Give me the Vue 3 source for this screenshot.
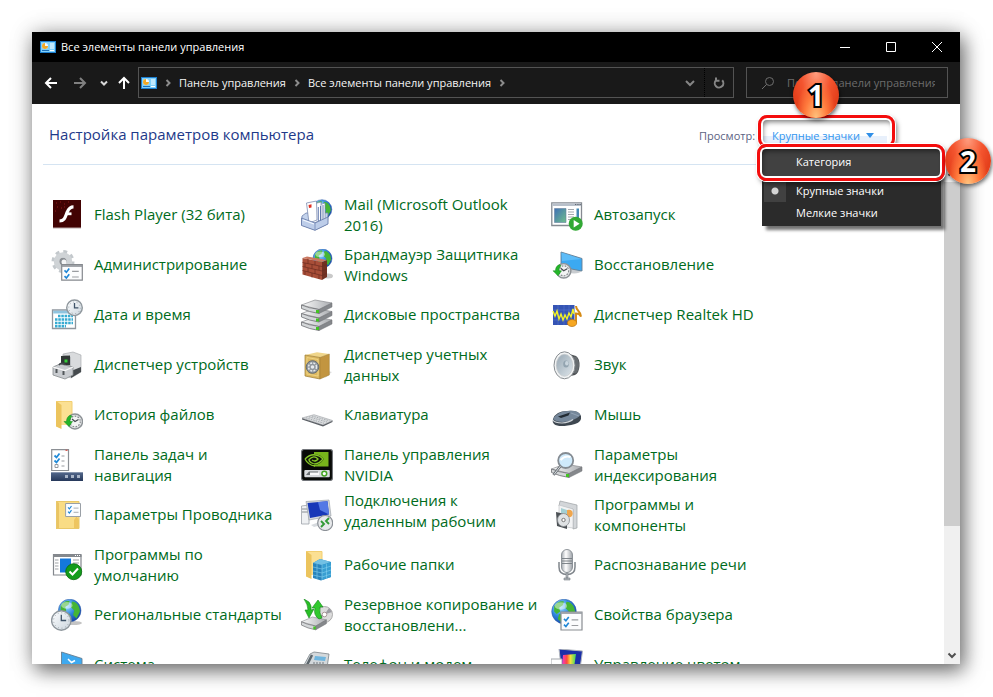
<script setup>
import { ref } from 'vue'

const search = ref('')
const view = ref('Крупные значки')
const menuOpen = ref(true)

const globe = (x, y, r) => `
  <circle cx="${x}" cy="${y}" r="${r}" fill="url(#g-globe)" stroke="#2b57a5" stroke-width=".5"/>
  <path transform="translate(${x} ${y}) scale(${r / 10})" fill="#45b535" d="M-8-4C-6-8-2-9 0-8L-1-5-4-3-3 0-6 2-8 0ZM2-8C6-8 9-4 9 1L6 7 3 4 4 0 1-3ZM-4 2L0 3 1 6-2 9-5 6Z"/>
  <ellipse cx="${x - r * 0.25}" cy="${y - r * 0.45}" rx="${r * 0.5}" ry="${r * 0.3}" fill="#fff" opacity=".45"/>`

const clock = (x, y, r) => `
  <circle cx="${x}" cy="${y}" r="${r}" fill="url(#g-clock)" stroke="#8f979d" stroke-width="1.4"/>
  <circle cx="${x}" cy="${y}" r="${r - 2}" fill="none" stroke="#8f979d" stroke-width=".8" stroke-dasharray="1 2.6"/>
  <path d="M${x} ${y - r * 0.6}V${y}H${x + r * 0.5}" fill="none" stroke="#3f5368" stroke-width="1.3"/>`

const historyClock = (x, y, r) => `
  <circle cx="${x}" cy="${y}" r="${r}" fill="#e4e6e7" stroke="#8d9296" stroke-width="1.4"/>
  <circle cx="${x}" cy="${y}" r="${r - 2.2}" fill="#f3f4f4" stroke="#84898d" stroke-width="1.2" stroke-dasharray="1.600 1.400"/>
  <path d="M${x - 3} ${y - 2.5}L${x} ${y} ${x + 3.5} ${y - 2}" fill="none" stroke="#454b50" stroke-width="1.3"/>
  <path d="M${x - r + 3} ${y - r + 1}C${x - r} ${y - 5} ${x - r - 1} ${y - 3} ${x - r - 1} ${y}h-2.5l5 5 3.5-5h-2.500c0-3 1-4 2-5z" fill="#25b52a" stroke="#128a1a" stroke-width=".5"/>`

const drive = (y) => `
  <path d="M.5 ${y + 5}L14 ${y} 31 ${y + 3} 18 ${y + 9.5}Z" fill="url(#g-silver)" stroke="#8b8d90" stroke-width=".7"/>
  <path d="M.5 ${y + 5}V${y + 8.5}Q8 ${y + 12} 18 ${y + 13.500}V${y + 9.5}Q7 ${y + 8} .5 ${y + 5}Z" fill="#d4d7d9" stroke="#6d6f72" stroke-width=".8"/>
  <path d="M18 ${y + 9.5}L31 ${y + 3}V${y + 7}L18 ${y + 13.5}Z" fill="#85888c" stroke="#6d6f72" stroke-width=".5"/>
  <path d="M15 ${y + 10}h3v3h-3z" fill="#42c422"/>`

const folder = `
  <path d="M5 2H21V26H9V29L5 27Z" fill="#fbe093"/>
  <path d="M5 2L10.500 6V30L5 27.500Z" fill="#ecc45d"/>
  <path d="M5.500 2.500H21V25" fill="none" stroke="#f2cf70"/>`

const checks = (x, y, s) => `
  <path transform="translate(${x} ${y}) scale(${s})" d="M0 2L2 4 5 0M0 8L2 10 5 6" fill="none" stroke="#2087d6" stroke-width="1.7"/>
  <path transform="translate(${x} ${y}) scale(${s})" d="M8 3H15M8 9H15" stroke="#9a9da1" stroke-width="1.2"/>`

const icons = {
  flash: `<path d="M2 1H30V29.500H2Z" fill="#b9a8a8"/><path d="M2 1H30V28.500H2Z" fill="#420303"/>
    <path d="M5 4h1M9 3h1M13 5h1M6 8h1M10 9h1M4 12h1M17 3h1M13 8h1" stroke="#8d1b1b"/>
    <path d="M8.500 22C14.500 22 14.500 16.500 16.500 12.500 18 9 19.500 7.800 22.500 7.800" fill="none" stroke="#fff" stroke-width="3.200"/><path d="M15.500 14.800H20.500" stroke="#fff" stroke-width="2.800"/>`,
  admin: `<circle cx="12" cy="12.500" r="9.500" fill="none" stroke="#c3c8cc" stroke-width="4" stroke-dasharray="3.700 3.760"/>
    <circle cx="12" cy="12.500" r="6.500" fill="none" stroke="#cfd3d6" stroke-width="5.500"/><circle cx="12" cy="12.500" r="3.700" fill="#8a8f94"/><circle cx="13" cy="13" r="2.500" fill="#f4f5f6"/>
    <path d="M10.700 15.700H31.300V31.200H10.700Z" fill="#fcfdfe" stroke="#85898e" stroke-width="1.200"/><path d="M11 17H31" stroke="#8d9197" stroke-width="1.600"/>
    ${checks(13.5, 19.5, 0.95)}`,
  date: `<path d="M1.500 11H24.500V29.500H1.500Z" fill="#fff" stroke="#90979e" stroke-width="1.300"/><path d="M2.200 11.700H23.800V14.500H2.200Z" fill="#8fc4df"/>
    <g stroke="#37abd2" stroke-width="2.400" stroke-dasharray="2.500 .800"><path d="M7 17H22"/><path d="M4 20.500H22"/><path d="M4 24H22"/><path d="M4 27.300H15"/></g>${clock(23.5, 8.8, 7.8)}`,
  mail: `${globe(21, 10.5, 9.8)}<path d="M1 17L5 14H27L26.500 25 14 31 .5 26Z" fill="#c4d3ec" stroke="#6f83ae" stroke-width=".8"/>
    <path d="M15 7L24 4V21L15 25Z" fill="#fff" stroke="#7486ac" stroke-width=".7"/><path d="M10.500 5.500L20 3V21L11 25Z" fill="#fff" stroke="#7486ac" stroke-width=".7"/><path d="M5.500 4L15.500 2 16 21 8 24Z" fill="#fff" stroke="#6a7ca6" stroke-width=".7"/>
    <path d="M17.300 8V22M19.500 7V22M22 6V22" stroke="#536da6" stroke-width=".9"/><path d="M7.500 6L10.500 5.300V8.500L8 9Z" fill="#df3023"/>
    <path d="M.5 19L14 24 27 18V25L14 31.300 .5 26.500Z" fill="#bdcde9" stroke="#6377a6" stroke-width=".8"/><path d="M14 24V31" stroke="#7e92bd"/><path d="M2 21L13 25" stroke="#f4f8ff" stroke-width="1.200"/>`,
  firewall: `${globe(21.5, 9.5, 9.5)}<ellipse cx="27" cy="27" rx="5" ry="2.500" fill="#c9c9c9"/>
    <path d="M1.500 9L21 13V31L1.500 25.500Z" fill="#a84e38"/><path d="M21 13L26 11V28L21 31Z" fill="#713122"/><path d="M1.500 9L6 7.500 26 11 21 13Z" fill="#ca7861"/>
    <path d="M1.500 13.500L21 17.500M1.500 17.500L21 22M1.500 21.500L21 26.500M7 10V14.500M14 12V16M4 14V18M11 15.500V19.500M18 17V21M7 19V23M14 20.500V25M4 22.500V26M11 24V28.500M18 26V30M21 17.500L26 15.500M21 22L26 20M21 26.500L26 24" stroke="#6a2b20" stroke-width=".7"/>`,
  disks: `${drive(18)}${drive(9.5)}${drive(1)}`,
  autoplay: `<path d="M.8 3.800H30.500V26.500H.8Z" fill="#fff" stroke="#858a91" stroke-width="1.300"/><path d="M1.400 4.400H30V7H1.400Z" fill="#b8c0ca"/><path d="M24 5.500h1.300M26.300 5.500h1.300M28.500 5.500h1.300" stroke="#606873"/>
    <path d="M3.500 9.500H15V23.500H3.500Z" fill="url(#g-pic)" stroke="#6580a0" stroke-width=".6"/><path d="M17 10.500h6M17 13h6M17 15.500h6M17 18h6M17 20.500h3" stroke="#a2a7ad" stroke-width="1.200"/><path d="M25.500 9.500H28V20H25.500Z" fill="#4489b4"/>
    <circle cx="24.700" cy="24.700" r="7" fill="#32a934"/><path d="M22.700 21L28.600 24.700 22.700 28.400Z" fill="#fff"/>`,
  recovery: `<ellipse cx="23" cy="22" rx="7" ry="2.500" fill="#c8ccd0"/><path d="M10 3L31 9.500V22L10 18Z" fill="#3ba9f2" stroke="#667e91" stroke-width=".9"/><path d="M10.500 3.500L30.500 10 11 12Z" fill="#6cc5fb" opacity=".7"/>${historyClock(12.7, 21.8, 7.2)}`,
  realtek: `<path d="M2 6H23.500V26H2Z" fill="#3554b4"/><path d="M2 11H23M2 16H23M2 21H23M7 6V26M13 6V26M18 6V26" stroke="#5574cd" stroke-width=".6"/>
    <path d="M2 12L4 17 6 12 8 20 10 15 12 21 14 16 16 20 18 14 20 18 22 10 23 15" fill="none" stroke="#f2f224" stroke-width="1.400"/>
    <path d="M25 7C25 12 30 12 30 17.500 29 15.500 27 14.500 25 14.500V23.500" fill="none" stroke="#d58a15" stroke-width="2"/><ellipse cx="21" cy="24" rx="4.700" ry="3.500" fill="#f6a722" stroke="#b66f0c" stroke-width=".7"/>`,
  device: `<path d="M12 5L22 3 30 6V23L20 29 12 25Z" fill="#d9dbdd" stroke="#9fa3a6" stroke-width=".6"/><path d="M12 5L20 8V28L12 25Z" fill="#bcbfc2"/><path d="M20 22L30 18V23L20 29Z" fill="#454a4d"/>
    <path d="M10 7L19 6.500V16L10 17Z" fill="#303735"/><path d="M13.500 10.500h3v3h-3z" fill="#33cf39"/>
    <path d="M2 18L9 15 22 18V26L14 30 2 26Z" fill="#c9ccd0" stroke="#858a8d" stroke-width=".8"/><path d="M2 18L14 21.500 22 18" fill="none" stroke="#f8f8f8" stroke-width="1.200"/><path d="M5.500 20v4M12.500 22v4" stroke="#52575a" stroke-width="2"/><path d="M8 16Q10 13 14 15.500" stroke="#43494d" stroke-width="1.500" fill="none"/>`,
  credentials: `<path d="M24 29L31 23 27 22Z" fill="#ddd"/><path d="M4 6L16 3.300 28.300 5 19 8.500Z" fill="#efd58a"/><path d="M4 6L19 8.500V30L4 27Z" fill="#dcb860" stroke="#9c7b30" stroke-width=".7"/><path d="M19 8.500L28.300 5V26L19 30Z" fill="#c29540" stroke="#9c7b30" stroke-width=".5"/><path d="M6 8.500L17 10.500V27L6 25Z" fill="none" stroke="#f2d98b" stroke-width=".8"/>
    <circle cx="11.500" cy="18" r="6.300" fill="#90979c" stroke="#666d72"/><circle cx="11.500" cy="18" r="4" fill="none" stroke="#e6eaec" stroke-width="1.500" stroke-dasharray="2 1.200"/><circle cx="11.500" cy="18" r="1.800" fill="#e7ebed"/>`,
  sound: `<path d="M15 4L25 7Q29 10 28.500 17 28 24 24 26L15 28Z" fill="#4d5154"/><ellipse cx="24" cy="16" rx="4" ry="8.500" fill="#676c70"/><ellipse cx="13.500" cy="16.300" rx="10.500" ry="13.500" fill="#f1f3f4" stroke="#888d91"/>
    <ellipse cx="13.500" cy="16.300" rx="8.200" ry="11" fill="url(#g-cone)" stroke="#c1c5c8" stroke-width=".7"/><ellipse cx="15" cy="15" rx="2.800" ry="3.600" fill="#93a4b0"/><ellipse cx="15.800" cy="14.300" rx="1.700" ry="2.200" fill="#c9d5dd"/>`,
  history: `${folder}${historyClock(24, 22.5, 7.5)}`,
  keyboard: `<path d="M1 19L13 15.700 31.500 21.500 22 26Z" fill="#dadcde" stroke="#9b9ea2" stroke-width=".6"/><path d="M1 19.300L22 26 31.500 21.800V23L22 27.500 1 20.500Z" fill="#5c6066"/><path d="M5 18.800L23 24.300M8 17.800L26 23M11 17L28.500 21.800" stroke="#a3a8ad" stroke-width=".9" stroke-dasharray="1.500 1"/>`,
  mouse: `<path d="M2 20Q5 12 16 12 28 11 30 17 31 23 24 25 8 29 3 25 1 23 2 20Z" fill="#3e4750"/><path d="M2 20Q7 12 17 12 27 11 29.500 16 24 22 12 23 5 23 2 20Z" fill="#75879a"/><path d="M1.800 21Q4 24 11 24 18 23.500 22 20.500" fill="none" stroke="#d0d5da" stroke-width="1.100"/><path d="M7 17.500L19 13.500 17.500 16.500 10 19Z" fill="#222b33"/><path d="M20 14L28 17" stroke="#92a3b5"/>`,
  taskbar: `<path d="M.7.700H17.500V21.500H.7Z" fill="#fff" stroke="#8b8f94" stroke-width="1.200"/><path d="M14.500 1.300h2" stroke="#db5449" stroke-width="1.200"/>
    <path d="M3.500 6.500L5.500 8.500 8.500 4.500M3.500 11.500L5.500 13.500 8.500 9.500" fill="none" stroke="#218bd8" stroke-width="1.800"/><path d="M10.500 7h3M10.500 12h3M10.500 17h3" stroke="#979b9f"/><path d="M4 15.500h3v3H4z" fill="none" stroke="#95999e"/>
    <path d="M0 23.300H32V32H0Z" fill="url(#g-bar)"/><path d="M14 26h3v3h-3zM20 26h3v3h-3zM26 26h3v3h-3z" fill="#a8b4c7"/>`,
  nvidia: `<rect x=".5" y=".5" width="31" height="31" rx="2.500" fill="#080a07" stroke="#72757a" stroke-width="1.200"/><path d="M13 3H27.500V17.500H13Z" fill="#78b51b"/>
    <path d="M4 10Q10 2 19 6.500L23 10Q18 17 12 15.500 7 14.500 4 10Z" fill="#10160b"/><path d="M4 10Q11 3 19 7.500L22 10Q17 16 12 14.500 8 13 8 10.500 13 5.500 17 10 14.500 13.500 11 11M4 10Q7 16 14 17" fill="none" stroke="#86c926" stroke-width="1.300"/>
    <rect x="3.300" y="21" width="25.500" height="7.200" rx="1" fill="#d8dbdd"/><path d="M5 26L8 22.500H17V26Z" fill="#6b7073"/><rect x="9" y="23.500" width="9" height="2.500" fill="#f9f9f9"/><circle cx="23.300" cy="24.600" r="2.400" fill="#fff" stroke="#46a524" stroke-width="1.500"/>`,
  indexing: `${drive(15)}<circle cx="14.700" cy="11.500" r="7.500" fill="#cfeafb" stroke="#858c93" stroke-width="1.800"/><path d="M9.500 11Q14 6 19.500 8" fill="none" stroke="#fff" stroke-width="2"/><path d="M9.500 17L2.500 26" stroke="#6c7278" stroke-width="2.600"/><path d="M9.500 17L3 25.500" stroke="#dadee1"/>`,
  explorer: `<path d="M5 2H28V29.500H5Z" fill="#f9dc85"/><path d="M5 2L8 4V30H5Z" fill="#eac463"/><path d="M23 29.500V21L25.500 17.500 28 21V29.500Z" fill="#eec560"/><path d="M5.500 2.500H28V29.500H5.500Z" fill="none" stroke="#e9c869"/>
    <path d="M14.600 4.500H29.500V17.500H14.600Z" fill="#fbfdff" stroke="#9aa0a6"/>${checks(17, 7, 0.7)}`,
  remote: `<path d="M.5 7L8 6V25H.5Z" fill="#eff1f3" stroke="#9da2a8" stroke-width=".8"/><path d="M1 10h6M1 13h6" stroke="#888e94"/><path d="M5 2.500L28 1 30 17 8 21Z" fill="#d6dade" stroke="#9298a0" stroke-width=".6"/><path d="M6.500 4L26.500 2.300 28 15.500 9 19Z" fill="#1838b8"/><path d="M17 3L26.500 2.300 28 15.500 19 11Z" fill="#5378e5"/><path d="M10 26L21 22 24 25 13 28Z" fill="#d6dade"/>
    <circle cx="24.200" cy="24" r="7.500" fill="#e7e9eb" stroke="#8b9096" stroke-width="1.200"/><path d="M20 22L23 25 20 28M28 19L25 22 28 25" fill="none" stroke="#329a36" stroke-width="1.900"/>`,
  programs: `<path d="M9 2L26 6V29L22 30V10L8 7Z" fill="#d3d6d9" stroke="#9ca0a4" stroke-width=".7"/><path d="M8 6L22 10V29L8 27Z" fill="#f2f3f4" stroke="#bcc0c3" stroke-width=".6"/><circle cx="18" cy="14.500" r="3.700" fill="#f0a64d"/><path d="M10 9l6 2v4l-6-1z" fill="#a3cfd3"/>
    <path d="M5 13L16 15.500V30L6 27Z" fill="#4c5155"/><ellipse cx="12.500" cy="21" rx="6" ry="6.500" fill="#dfe2e4" stroke="#888c90" stroke-width=".8"/><circle cx="12.500" cy="21" r="1.700" fill="#fff" stroke="#777"/>`,
  defaults: `<path d="M2.500 5.500H30V26H2.500Z" fill="#fff" stroke="#83878d" stroke-width="1.200"/><path d="M2 7H30.500" stroke="#85898e" stroke-width="2"/><path d="M24 6.500h1M26 6.500h1M28 6.500h1" stroke="#fff"/><path d="M4 11h3.500M4 14h3.500M4 17h3.500M4 20h3.500M22 11h6M22 14h6" stroke="#9da1a5"/><path d="M9 9.500H20V23.500H9Z" fill="#1478dc"/>
    <circle cx="22.700" cy="22.700" r="8" fill="#139c1c" stroke="#076b0e" stroke-width=".8"/><path d="M18.500 22.500L21.500 25.500 27 19.500" fill="none" stroke="#fff" stroke-width="2"/>`,
  folders: `${folder}<path d="M12 14L19 10 30 13V28L20 31.500 12 29Z" fill="#2984bd"/><path d="M12 14L19 10 30 13 21 16Z" fill="#72c0e4"/><path d="M21 16L30 13V28L21 31Z" fill="#389ed2"/><path d="M12 18L21 20 30 17M12 22L21 24 30 21M12 26L21 28 30 25M16 15V30M21 16V31M25.500 14.500V30" fill="none" stroke="#83d0ef" stroke-width=".6"/>`,
  speech: `<rect x="10.500" y=".5" width="11" height="23" rx="5.500" fill="url(#g-mic)" stroke="#858b91" stroke-width=".9"/><path d="M11 9.500H21M11 12H21M11 14.500H21" stroke="#747a80" stroke-width=".9"/><path d="M8 13V18Q8 25.500 16 25.500 24 25.500 24 18V13" fill="none" stroke="#80868c" stroke-width="1.500"/><path d="M15 24h2v5h-2zM13 29H19V31H13Z" fill="#afb4b8" stroke="#7a8086" stroke-width=".6"/>`,
  region: `<ellipse cx="22" cy="24" rx="9" ry="2" fill="#c4c4c4"/>${globe(18.7, 11.5, 11.3)}${clock(10.3, 21.5, 9.7)}`,
  backup: `<circle cx="23.500" cy="15.500" r="8" fill="#dcdcdc" stroke="#999" stroke-width=".8"/><path d="M23.500 15.500L28 9 31 13ZM23.500 15.500L18 21 16 17Z" fill="#9c9ca3"/><circle cx="23.500" cy="15.500" r="2.300" fill="#fff" stroke="#a99"/>
    <g transform="translate(0 18) scale(.82 .95)">${drive(0)}</g><path d="M3 0L8 3Q11 7 10 11L13 10 8 19 4 11 7 11Q7 6 3 0Z" fill="#28bf26" stroke="#138419" stroke-width=".6"/><path d="M18 20Q12 16 14 9L11 9 17 1 22 8H19Q18 14 21 19Z" fill="#30c92d" stroke="#138419" stroke-width=".6"/>`,
  browser: `${globe(13, 12.5, 12.3)}<path d="M10 13H31V31H10Z" fill="#fbfcfd" stroke="#898d92" stroke-width="1.200"/><path d="M10 14H31" stroke="#9ba0a6" stroke-width="1.800"/>${checks(13, 18, 0.95)}`,
  system: `<path d="M10.500 3L31 9.500V24L10.500 20Z" fill="#3ea9ef" stroke="#667e91" stroke-width=".9"/><path d="M17 10L20.500 13.500 24 11.500" fill="none" stroke="#fff" stroke-width="1.500"/>`,
  phone: `<path d="M3 16L9 5 13 3 28 5 26 19 2 20Z" fill="#d3d8db" stroke="#7b8388" stroke-width=".8"/><path d="M5 18L11 6" stroke="#5d666c" stroke-width="2.500"/><path d="M14 7L25 8 24 12 13 11Z" fill="#6fb5de"/><path d="M12 14H23M11 16H22" stroke="#727a80" stroke-dasharray="2 1"/>`,
  color: `<path d="M8 0L31.500 2 29 20 10 17Z" fill="#1b2fa8" stroke="#b2b7bd"/><path d="M0 10H11V24H0Z" fill="#fff" stroke="#a3a7ac"/><path d="M12 6L25 5 23 19 11 18Z" fill="url(#g-rainbow)"/>`,
}

const items = [
  ['flash', 'Flash Player (32 бита)'],
  ['mail', 'Mail (Microsoft Outlook\n2016)'],
  ['autoplay', 'Автозапуск'],
  ['admin', 'Администрирование'],
  ['firewall', 'Брандмауэр Защитника\nWindows'],
  ['recovery', 'Восстановление'],
  ['date', 'Дата и время'],
  ['disks', 'Дисковые пространства'],
  ['realtek', 'Диспетчер Realtek HD'],
  ['device', 'Диспетчер устройств'],
  ['credentials', 'Диспетчер учетных\nданных'],
  ['sound', 'Звук'],
  ['history', 'История файлов'],
  ['keyboard', 'Клавиатура'],
  ['mouse', 'Мышь'],
  ['taskbar', 'Панель задач и\nнавигация'],
  ['nvidia', 'Панель управления\nNVIDIA'],
  ['indexing', 'Параметры\nиндексирования'],
  ['explorer', 'Параметры Проводника'],
  ['remote', 'Подключения к\nудаленным рабочим', true],
  ['programs', 'Программы и\nкомпоненты'],
  ['defaults', 'Программы по\nумолчанию'],
  ['folders', 'Рабочие папки'],
  ['speech', 'Распознавание речи'],
  ['region', 'Региональные стандарты'],
  ['backup', 'Резервное копирование и\nвосстановлени...'],
  ['browser', 'Свойства браузера'],
  ['system', 'Система'],
  ['phone', 'Телефон и модем'],
  ['color', 'Управление цветом'],
].map(([icon, label, raised]) => ({ icon, label, raised }))

const panelIcon = `<path d="M0 0H16V12H0Z" fill="#1d7fd0"/><path d="M1 1H15V11H1Z" fill="#7fd0fa"/><circle cx="5" cy="5" r="3" fill="#f5f8fa"/><path d="M5 5V2A3 3 0 1 0 8 5Z" fill="#f0a927"/><path d="M10 3h4M10 5h4M10 7h4" stroke="#fff"/><path d="M2 9.500h7" stroke="#1d6fb8"/><path d="M10 9.500h4" stroke="#fff"/>`

function pick(name) {
  view.value = name
  menuOpen.value = false
}
</script>

<template>
  <div class="desktop">
    <svg class="defs" width="0" height="0" aria-hidden="true">
      <defs>
        <radialGradient id="g-globe" cx=".35" cy=".3" r=".8"><stop offset="0" stop-color="#9fe0ff" /><stop offset=".5" stop-color="#2f86dd" /><stop offset="1" stop-color="#123a9c" /></radialGradient>
        <linearGradient id="g-clock" x1="0" y1="0" x2="1" y2="1"><stop offset="0" stop-color="#fdfeff" /><stop offset="1" stop-color="#cbd5dd" /></linearGradient>
        <linearGradient id="g-silver"><stop offset="0" stop-color="#fafafa" /><stop offset="1" stop-color="#a9acb0" /></linearGradient>
        <linearGradient id="g-pic" x1="0" y1="0" x2="1" y2="1"><stop offset="0" stop-color="#3f6fb5" /><stop offset="1" stop-color="#6fc08c" /></linearGradient>
        <linearGradient id="g-cone" x1="0" y1="0" x2="1" y2="1"><stop offset="0" stop-color="#97a7b3" /><stop offset="1" stop-color="#dde5ea" /></linearGradient>
        <linearGradient id="g-bar" x1="0" y1="0" x2="0" y2="1"><stop offset="0" stop-color="#54698c" /><stop offset="1" stop-color="#26385a" /></linearGradient>
        <linearGradient id="g-mic"><stop offset="0" stop-color="#a6abb1" /><stop offset=".4" stop-color="#fff" /><stop offset="1" stop-color="#9da2a8" /></linearGradient>
        <linearGradient id="g-rainbow"><stop offset="0" stop-color="#f03ad0" /><stop offset=".35" stop-color="#ff4b3a" /><stop offset=".6" stop-color="#f7e13a" /><stop offset="1" stop-color="#36d668" /></linearGradient>
      </defs>
    </svg>

    <main class="window">
      <header class="titlebar">
        <svg class="app-icon" viewBox="0 0 16 12" aria-hidden="true" v-html="panelIcon"></svg>
        <span class="title">Все элементы панели управления</span>
        <button class="caption" aria-label="Свернуть"><svg viewBox="0 0 12 12"><path d="M1 6.500H11" /></svg></button>
        <button class="caption" aria-label="Развернуть"><svg viewBox="0 0 12 12"><path d="M1.500 1.500H10.500V10.500H1.500Z" /></svg></button>
        <button class="caption" aria-label="Закрыть"><svg viewBox="0 0 12 12"><path d="M1 1L11 11M11 1L1 11" /></svg></button>
      </header>

      <nav class="toolbar">
        <div class="history">
          <button aria-label="Назад"><svg class="arrow" viewBox="0 0 14 14"><path d="M13 7H2M7 2L2 7 7 12" /></svg></button>
          <button class="dim" aria-label="Вперед"><svg class="arrow" viewBox="0 0 14 14"><path d="M1 7H12M7 2L12 7 7 12" /></svg></button>
          <button class="small" aria-label="Последние"><svg class="tiny" viewBox="0 0 8 8"><path d="M1 2.500L4 5.500 7 2.500" /></svg></button>
          <button class="small" aria-label="Вверх"><svg class="arrow" viewBox="0 0 14 14"><path d="M7 13V2M2 7L7 2 12 7" /></svg></button>
        </div>
        <div class="address">
          <svg class="app-icon" viewBox="0 0 16 12" aria-hidden="true" v-html="panelIcon"></svg>
          <svg class="crumb-sep" viewBox="0 0 8 8"><path d="M2.500 1L5.500 4 2.500 7" /></svg>
          <a href="#">Панель управления</a>
          <svg class="crumb-sep" viewBox="0 0 8 8"><path d="M2.500 1L5.500 4 2.500 7" /></svg>
          <a href="#">Все элементы панели управления</a>
          <svg class="crumb-sep" viewBox="0 0 8 8"><path d="M2.500 1L5.500 4 2.500 7" /></svg>
          <button class="drop" aria-label="Предыдущие расположения"><svg viewBox="0 0 10 10"><path d="M1 3L5 7 9 3" /></svg></button>
          <button class="refresh" aria-label="Обновить"><svg viewBox="0 0 12 12"><path d="M3 3.200A4.300 4.300 0 1 0 9.200 3.300M3 .500V3.800H6.500" /></svg></button>
        </div>
        <label class="search">
          <svg viewBox="0 0 14 14"><circle cx="8.500" cy="5.500" r="4" /><path d="M5.500 8.500L1 13" /></svg>
          <input v-model="search" type="search" placeholder="Поиск в панели управления" aria-label="Поиск в панели управления" />
        </label>
        <span class="badge badge-one">1</span>
      </nav>

      <section class="heading">
        <h1>Настройка параметров компьютера</h1>
        <span class="view-label">Просмотр:</span>
        <div class="view">
          <button class="view-button" aria-haspopup="menu" :aria-expanded="menuOpen" @click="menuOpen = !menuOpen">
            {{ view }}
            <svg viewBox="0 0 8 5"><path d="M0 0H8L4 5Z" /></svg>
          </button>
          <span class="ring ring-view"></span>
          <div v-if="menuOpen" class="menu" role="menu">
            <button class="hot" role="menuitemradio" @click="pick('Категория')">Категория</button>
            <button :class="{ checked: view === 'Крупные значки' }" role="menuitemradio" @click="pick('Крупные значки')">Крупные значки</button>
            <button role="menuitemradio" @click="pick('Мелкие значки')">Мелкие значки</button>
            <span class="ring ring-item"></span>
            <span class="badge badge-two">2</span>
          </div>
        </div>
      </section>

      <section class="content">
        <div class="items">
          <a v-for="item in items" :key="item.icon" class="item" href="#">
            <svg viewBox="0 0 32 32" aria-hidden="true" v-html="icons[item.icon]"></svg>
            <span :class="{ raised: item.raised }">{{ item.label }}</span>
          </a>
        </div>
        <div class="scrollbar" aria-hidden="true">
          <svg viewBox="0 0 16 17"><path d="M4.500 10.500L8 7 11.500 10.500" /></svg>
          <div class="thumb"></div>
          <div class="track"></div>
          <svg viewBox="0 0 16 17"><path d="M4.500 6.500L8 10 11.500 6.500" /></svg>
        </div>
      </section>
    </main>
  </div>
</template>

<style>
body {
  margin: 0;
  background: #fff;
}
</style>

<style scoped>
.desktop {
  box-sizing: border-box;
  height: 100vh;
  padding: 32px 33px 33px 32px;
  overflow: hidden;
  font: 11px/16px "Open Sans", "Noto Sans", sans-serif;
}
.defs {
  position: absolute;
}
.window {
  box-sizing: border-box;
  display: flex;
  flex-direction: column;
  height: 100%;
  background: #fff;
  box-shadow: 0 0 22px rgba(0, 0, 0, 0.22), 4px 7px 18px rgba(0, 0, 0, 0.5);
}
button {
  padding: 0;
  border: 0;
  background: none;
  color: inherit;
  font: inherit;
}
a {
  color: inherit;
  text-decoration: none;
}
.titlebar {
  display: flex;
  align-items: center;
  height: 30px;
  padding-left: 8px;
  background: #000;
  color: #fff;
}
.app-icon {
  width: 16px;
  height: 12px;
  flex: none;
}
.title {
  flex: 1;
  padding-left: 5px;
}
.caption {
  display: grid;
  place-items: center;
  width: 46px;
  height: 30px;
}
.caption svg {
  width: 12px;
  height: 12px;
  fill: none;
  stroke: #fff;
}
.toolbar {
  position: relative;
  box-sizing: border-box;
  display: flex;
  align-items: center;
  height: 42px;
  padding: 0 12px 1px 0;
  background: #191919;
  color: #f4f4f4;
}
.history {
  display: flex;
  align-items: center;
  width: 102px;
  padding-left: 4px;
}
.history button {
  display: grid;
  place-items: center;
  width: 30px;
  height: 31px;
}
.history .dim {
  width: 28px;
}
.history .small {
  width: 20px;
}
.arrow {
  width: 14px;
  height: 14px;
  fill: none;
  stroke: #fff;
  stroke-width: 2;
}
.dim .arrow {
  stroke: #808080;
}
.tiny {
  width: 8px;
  height: 8px;
  fill: none;
  stroke: #d8d8d8;
  stroke-width: 2;
}
.address {
  box-sizing: border-box;
  display: flex;
  align-items: center;
  flex: 1;
  height: 31px;
  padding-left: 2px;
  border: 1px solid #535353;
  white-space: nowrap;
}
.crumb-sep {
  width: 8px;
  height: 8px;
  padding: 0 7px;
  fill: none;
  stroke: #8c8c8c;
  stroke-width: 2;
}
.drop {
  display: grid;
  place-items: center;
  width: 30px;
  height: 29px;
  margin-left: auto;
  border-right: 1px dotted #000;
}
.refresh {
  display: grid;
  place-items: center;
  width: 28px;
  height: 29px;
}
.drop svg {
  width: 10px;
  height: 10px;
  fill: none;
  stroke: #858585;
  stroke-width: 2;
}
.refresh svg {
  width: 12px;
  height: 12px;
  fill: none;
  stroke: #858585;
  stroke-width: 2;
}
.search {
  box-sizing: border-box;
  display: flex;
  align-items: center;
  width: 202px;
  height: 31px;
  margin-left: 12px;
  padding-left: 14px;
  border: 1px solid #535353;
}
.search svg {
  width: 14px;
  height: 14px;
  flex: none;
  fill: none;
  stroke: #6e6e6e;
}
.search input {
  flex: 1;
  min-width: 0;
  padding: 0 0 0 12px;
  border: 0;
  outline: 0;
  background: none;
  color: #eee;
  font: inherit;
}
.search input::placeholder {
  color: #6c6c6c;
}
.heading {
  display: flex;
  align-items: center;
  height: 60px;
  margin-left: 11px;
  padding-left: 6px;
  border-bottom: 1px solid #d5e4f2;
}
h1 {
  flex: 1;
  margin: 0;
  color: #1e3a8a;
  font-size: 15px;
  font-weight: 400;
  line-height: 20px;
}
.view-label {
  width: 63px;
  padding-top: 3px;
  color: #5b6282;
}
.view {
  position: relative;
  width: 125px;
  margin-right: 73px;
}
.view-button {
  display: flex;
  align-items: center;
  gap: 6px;
  width: 100%;
  height: 22px;
  padding: 3px 0 0 10px;
  background: linear-gradient(#fff 60%, #e8f0fb 60%);
  color: #3296f0;
  white-space: nowrap;
}
.view-button svg {
  width: 8px;
  height: 5px;
  fill: #2f8fe8;
}
.ring {
  position: absolute;
  box-sizing: border-box;
  border: 3px solid #f40d0d;
  border-radius: 9px;
  box-shadow: 0 0 0 1px #fff, inset 0 0 0 2px #fff, inset 2px 4px 5px rgba(0, 0, 0, 0.5), 2px 3px 5px rgba(0, 0, 0, 0.5);
  pointer-events: none;
}
.ring-view {
  inset: -8px -8px -3px -4px;
}
.menu {
  position: absolute;
  z-index: 1;
  top: 24px;
  left: 0;
  box-sizing: border-box;
  display: flex;
  flex-direction: column;
  width: 179px;
  padding-bottom: 2px;
  background: #2b2b2b;
  box-shadow: 4px 4px 3px rgba(0, 0, 0, 0.55);
  color: #fff;
}
.menu button {
  position: relative;
  height: 22px;
  padding-left: 34px;
  text-align: left;
}
.menu .hot {
  height: 29px;
  margin-bottom: 4px;
  background: #414141;
}
.checked::before {
  content: "";
  position: absolute;
  top: 0;
  left: 2px;
  width: 22px;
  height: 22px;
  background: radial-gradient(circle, #d4d4d4 3px, #414141 4px);
}
.ring-item {
  inset: -3px -4px auto -5px;
  height: 37px;
}
.badge {
  position: absolute;
  z-index: 2;
  display: grid;
  place-items: center;
  width: 46px;
  height: 46px;
  border-radius: 50%;
  background: radial-gradient(ellipse at 50% 100%, #ffc27c 0, #ff7a3c 35%, transparent 62%), radial-gradient(ellipse at 50% 0, #ff9e80 0, #f4552f 45%, #e5401c 75%);
  box-shadow: 1px 2px 4px rgba(0, 0, 0, 0.6);
  color: #fff;
  font: 700 28px/46px "Open Sans", "Noto Sans", sans-serif;
  -webkit-text-stroke: 4px #000;
  paint-order: stroke fill;
}
.badge-one {
  top: 10px;
  right: 121px;
}
.badge-two {
  top: -9px;
  right: -50px;
}
.content {
  display: flex;
  flex: 1;
  min-height: 0;
}
.items {
  display: grid;
  flex: 1;
  grid-template-columns: repeat(auto-fill, 250px);
  grid-auto-rows: 50px;
  align-content: start;
  padding: 25px 0 0 19px;
  overflow: hidden;
}
.item {
  display: flex;
  align-items: center;
  gap: 11px;
  height: 50px;
  color: #006b1c;
  font-size: 15px;
  line-height: 21px;
  white-space: pre;
}
.item svg {
  width: 32px;
  height: 32px;
  flex: none;
}
.item span {
  padding-bottom: 1px;
}
.item .raised {
  align-self: flex-start;
}
.scrollbar {
  display: flex;
  flex-direction: column;
  width: 16px;
  background: #f0f0f0;
}
.scrollbar svg {
  width: 16px;
  height: 17px;
  fill: none;
  stroke: #505050;
  stroke-width: 2;
}
.thumb {
  flex: 344;
  background: #cdcdcd;
}
.track {
  flex: 121;
}
</style>
